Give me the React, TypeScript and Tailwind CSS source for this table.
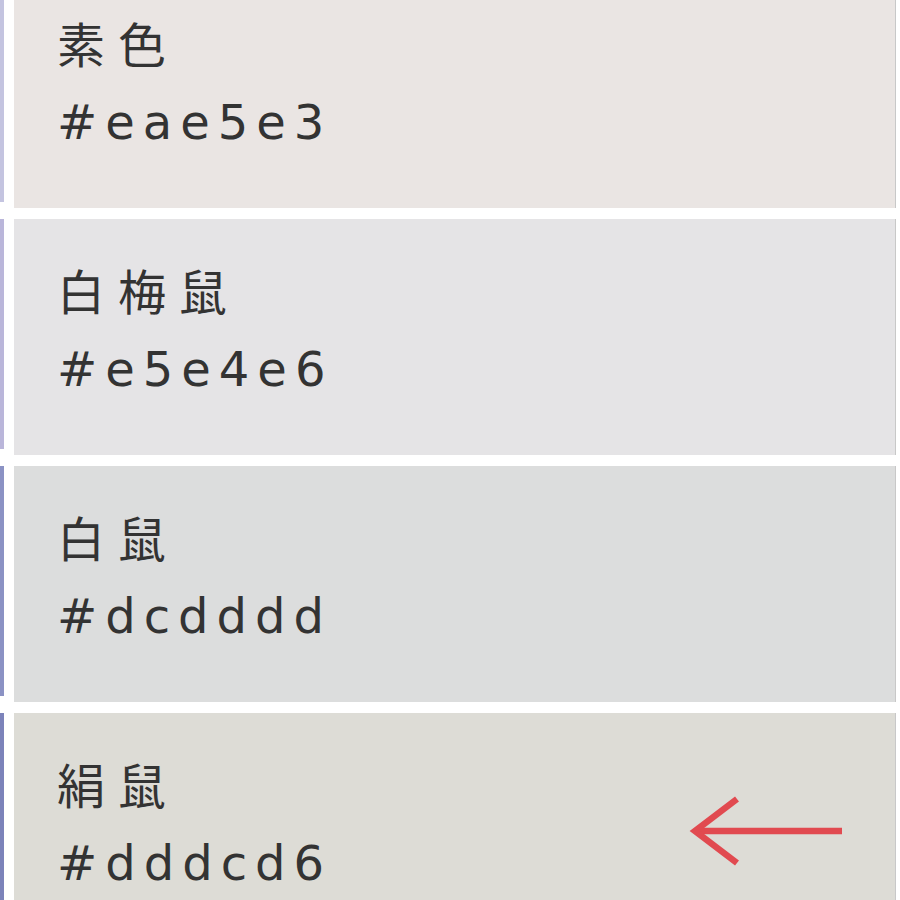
import React from 'react';

type Swatch = { name: string; hex: string; side: string; arrow?: boolean };

const swatches: Swatch[] = [
  { name: '素色', hex: '#eae5e3', side: '#c4c4e0' },
  { name: '白梅鼠', hex: '#e5e4e6', side: '#bab6da' },
  { name: '白鼠', hex: '#dcdddd', side: '#8b92c4' },
  { name: '絹鼠', hex: '#dddcd6', side: '#7c83ba', arrow: true },
];

const ArrowLeft: React.FC = () => (
  <svg width="156" height="72" viewBox="0 0 156 72" fill="none">
    <path d="M153 36H10" stroke="#e14a50" strokeWidth="6.5" />
    <path d="M48 4L6 36L48 68" stroke="#e14a50" strokeWidth="6.5" strokeLinejoin="miter" />
  </svg>
);

const App: React.FC = () => {
  return (
    <div className="h-[900px] w-[900px] overflow-hidden bg-white">
      <div className="-mt-[28px] flex flex-col gap-[11px]">
        {swatches.map(s => (
          <div key={s.hex} className="flex h-[236px] items-stretch">
            <div className="w-[4px] mb-[6px]" style={{ backgroundColor: s.side }} />
            <div
              className="ml-[10px] mr-[4px] flex flex-1 items-center border-r border-[#c8c8c8] pl-[43px]"
              style={{ backgroundColor: s.hex }}
            >
              <div
                className="flex-1 pb-[12px] text-[48px] leading-[76px] text-[#333333]"
                style={{ fontFamily: '"DejaVu Sans", "Noto Sans CJK JP", sans-serif' }}
              >
                <div className="tracking-[13px]">{s.name}</div>
                <div className="tracking-[8px]">{s.hex}</div>
              </div>
              {s.arrow && (
                <div className="mr-[50px]">
                  <ArrowLeft />
                </div>
              )}
            </div>
          </div>
        ))}
      </div>
    </div>
  );
};

export default App;
